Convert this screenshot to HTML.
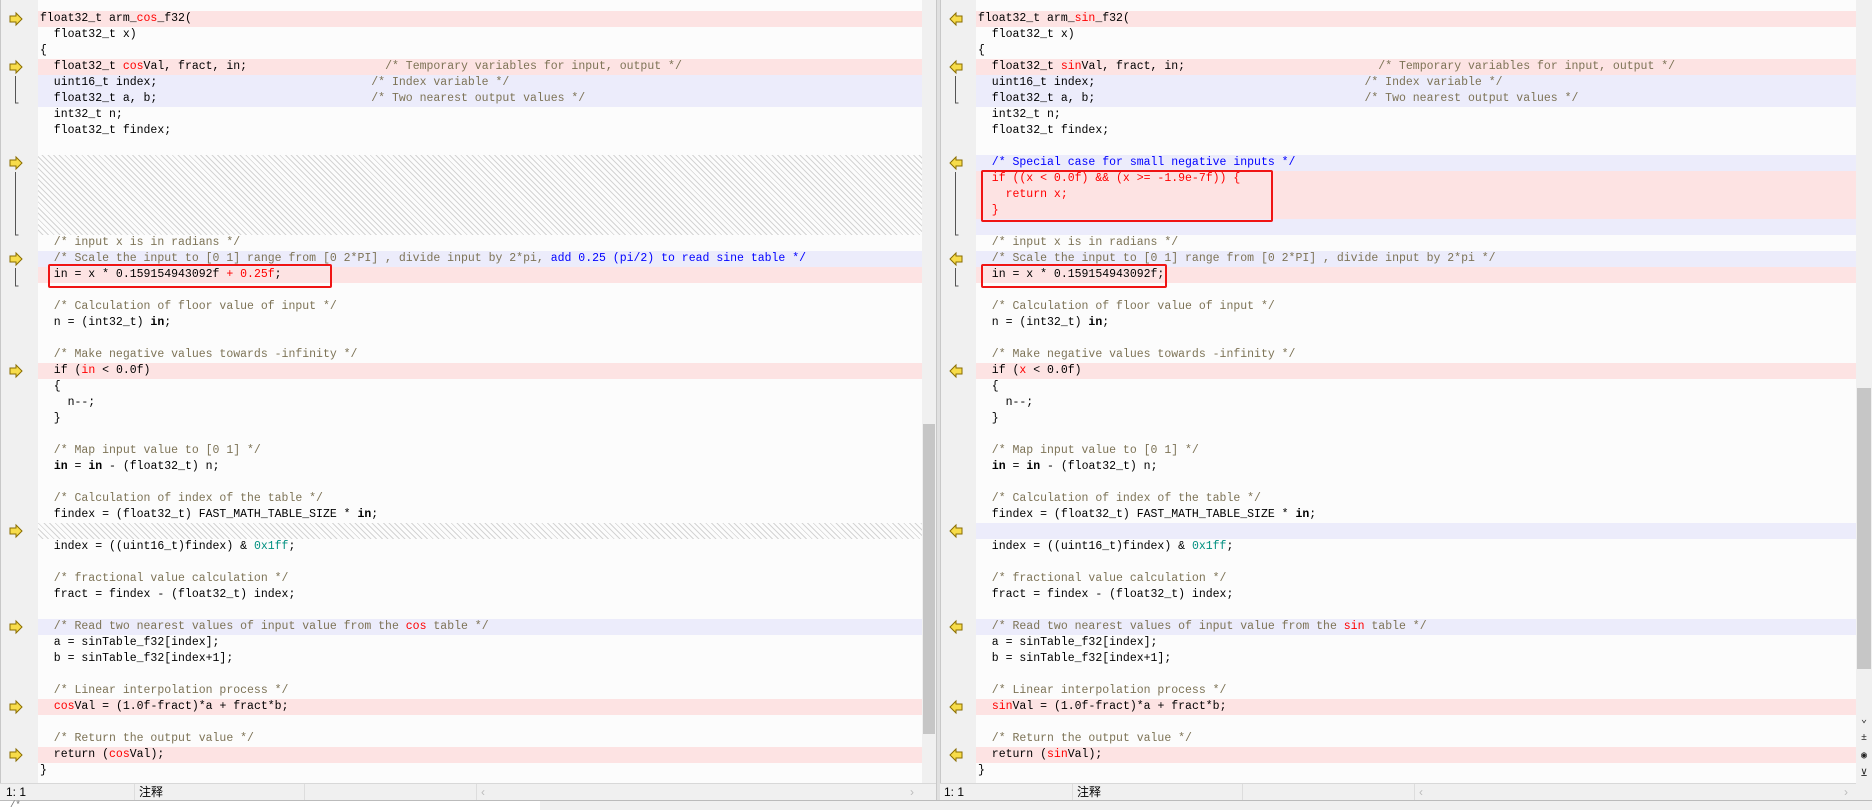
<!DOCTYPE html>
<html><head><meta charset="utf-8"><style>
*{margin:0;padding:0;box-sizing:border-box}
body{width:1872px;height:810px;overflow:hidden;background:#f0f0f0;font-family:"Liberation Mono",monospace;font-size:11.5px;color:#000;position:relative}
.pane{position:absolute;top:0;height:783px;background:#fcfcfc;overflow:hidden}
.gut{position:absolute;top:0;height:783px;background:#f0f0f0;border-left:1px solid #c8c8c8}
.r{position:absolute;left:0;right:0;height:16px;line-height:16px;white-space:pre;padding-left:2px}
.R{background:#fde3e3}.B{background:#ececfb}
.H{background:repeating-linear-gradient(45deg,#fcfcfc 0 3px,#d4d4d4 3px 4px)}
.c{color:#7d7356}.bl{color:#0000ff}.red{color:#f00}.g{color:#009080}.b{font-weight:bold}
.ar{position:absolute;width:14px;height:12px}
.br{position:absolute;border-left:1px solid #555;border-bottom:1px solid #555;width:5px}
.box{position:absolute;border:2px solid #f01414;border-radius:2px}
.sb{position:absolute;background:#f0f0f0}
.th{position:absolute;background:#c6c6c6}
.st{position:absolute;top:783px;height:17px;background:#f0f0f0;border-top:1px solid #d8d8d8;font-family:"Liberation Sans","Noto Sans CJK SC",sans-serif;font-size:12px;line-height:16px}
</style></head><body>

<!-- LEFT PANE -->
<div class="gut" style="left:0;width:38px"></div>
<div class="pane" style="left:38px;width:884px">
<div class="r R" style="top:11px">float32_t arm_<span class="red">cos</span>_f32(</div>
<div class="r" style="top:27px">  float32_t x)</div>
<div class="r" style="top:43px">{</div>
<div class="r R" style="top:59px">  float32_t <span class="red">cos</span>Val, fract, in;                    <span class="c">/* Temporary variables for input, output */</span></div>
<div class="r B" style="top:75px">  uint16_t index;                               <span class="c">/* Index variable */</span></div>
<div class="r B" style="top:91px">  float32_t a, b;                               <span class="c">/* Two nearest output values */</span></div>
<div class="r" style="top:107px">  int32_t n;</div>
<div class="r" style="top:123px">  float32_t findex;</div>
<div class="r H" style="top:155px;height:80px"></div>
<div class="r" style="top:235px"><span class="c">  /* input x is in radians */</span></div>
<div class="r B" style="top:251px"><span class="c">  /* Scale the input to [0 1] range from [0 2*PI] , divide input by 2*pi, </span><span class="bl">add 0.25 (pi/2) to read sine table */</span></div>
<div class="r R" style="top:267px">  in = x * 0.159154943092f<span class="red"> + 0.25f</span>;</div>
<div class="r" style="top:299px"><span class="c">  /* Calculation of floor value of input */</span></div>
<div class="r" style="top:315px">  n = (int32_t) <span class="b">in</span>;</div>
<div class="r" style="top:347px"><span class="c">  /* Make negative values towards -infinity */</span></div>
<div class="r R" style="top:363px">  if (<span class="red">in</span> &lt; 0.0f)</div>
<div class="r" style="top:379px">  {</div>
<div class="r" style="top:395px">    n--;</div>
<div class="r" style="top:411px">  }</div>
<div class="r" style="top:443px"><span class="c">  /* Map input value to [0 1] */</span></div>
<div class="r" style="top:459px">  <span class="b">in</span> = <span class="b">in</span> - (float32_t) n;</div>
<div class="r" style="top:491px"><span class="c">  /* Calculation of index of the table */</span></div>
<div class="r" style="top:507px">  findex = (float32_t) FAST_MATH_TABLE_SIZE * <span class="b">in</span>;</div>
<div class="r H" style="top:523px"></div>
<div class="r" style="top:539px">  index = ((uint16_t)findex) &amp; <span class="g">0x1ff</span>;</div>
<div class="r" style="top:571px"><span class="c">  /* fractional value calculation */</span></div>
<div class="r" style="top:587px">  fract = findex - (float32_t) index;</div>
<div class="r B" style="top:619px"><span class="c">  /* Read two nearest values of input value from the </span><span class="red">cos</span><span class="c"> table */</span></div>
<div class="r" style="top:635px">  a = sinTable_f32[index];</div>
<div class="r" style="top:651px">  b = sinTable_f32[index+1];</div>
<div class="r" style="top:683px"><span class="c">  /* Linear interpolation process */</span></div>
<div class="r R" style="top:699px">  <span class="red">cos</span>Val = (1.0f-fract)*a + fract*b;</div>
<div class="r" style="top:731px"><span class="c">  /* Return the output value */</span></div>
<div class="r R" style="top:747px">  return (<span class="red">cos</span>Val);</div>
<div class="r" style="top:763px">}</div>
</div>
<div class="sb" style="left:922px;top:0;width:14px;height:783px"></div>
<div class="th" style="left:923px;top:424px;width:12px;height:310px"></div>
<div style="position:absolute;left:936px;top:0;width:4px;height:800px;background:#e0e0e0;border-left:1px solid #c8c8c8"></div>

<!-- RIGHT PANE -->
<div class="gut" style="left:940px;width:36px"></div>
<div class="pane" style="left:976px;width:880px">
<div class="r R" style="top:11px">float32_t arm_<span class="red">sin</span>_f32(</div>
<div class="r" style="top:27px">  float32_t x)</div>
<div class="r" style="top:43px">{</div>
<div class="r R" style="top:59px">  float32_t <span class="red">sin</span>Val, fract, in;                            <span class="c">/* Temporary variables for input, output */</span></div>
<div class="r B" style="top:75px">  uint16_t index;                                       <span class="c">/* Index variable */</span></div>
<div class="r B" style="top:91px">  float32_t a, b;                                       <span class="c">/* Two nearest output values */</span></div>
<div class="r" style="top:107px">  int32_t n;</div>
<div class="r" style="top:123px">  float32_t findex;</div>
<div class="r B" style="top:155px"><span class="bl">  /* Special case for small negative inputs */</span></div>
<div class="r R red" style="top:171px">  if ((x &lt; 0.0f) &amp;&amp; (x &gt;= -1.9e-7f)) {</div>
<div class="r R red" style="top:187px">    return x;</div>
<div class="r R red" style="top:203px">  }</div>
<div class="r B" style="top:219px"></div>
<div class="r" style="top:235px"><span class="c">  /* input x is in radians */</span></div>
<div class="r B" style="top:251px"><span class="c">  /* Scale the input to [0 1] range from [0 2*PI] , divide input by 2*pi */</span></div>
<div class="r R" style="top:267px">  in = x * 0.159154943092f;</div>
<div class="r" style="top:299px"><span class="c">  /* Calculation of floor value of input */</span></div>
<div class="r" style="top:315px">  n = (int32_t) <span class="b">in</span>;</div>
<div class="r" style="top:347px"><span class="c">  /* Make negative values towards -infinity */</span></div>
<div class="r R" style="top:363px">  if (<span class="red">x</span> &lt; 0.0f)</div>
<div class="r" style="top:379px">  {</div>
<div class="r" style="top:395px">    n--;</div>
<div class="r" style="top:411px">  }</div>
<div class="r" style="top:443px"><span class="c">  /* Map input value to [0 1] */</span></div>
<div class="r" style="top:459px">  <span class="b">in</span> = <span class="b">in</span> - (float32_t) n;</div>
<div class="r" style="top:491px"><span class="c">  /* Calculation of index of the table */</span></div>
<div class="r" style="top:507px">  findex = (float32_t) FAST_MATH_TABLE_SIZE * <span class="b">in</span>;</div>
<div class="r B" style="top:523px"></div>
<div class="r" style="top:539px">  index = ((uint16_t)findex) &amp; <span class="g">0x1ff</span>;</div>
<div class="r" style="top:571px"><span class="c">  /* fractional value calculation */</span></div>
<div class="r" style="top:587px">  fract = findex - (float32_t) index;</div>
<div class="r B" style="top:619px"><span class="c">  /* Read two nearest values of input value from the </span><span class="red">sin</span><span class="c"> table */</span></div>
<div class="r" style="top:635px">  a = sinTable_f32[index];</div>
<div class="r" style="top:651px">  b = sinTable_f32[index+1];</div>
<div class="r" style="top:683px"><span class="c">  /* Linear interpolation process */</span></div>
<div class="r R" style="top:699px">  <span class="red">sin</span>Val = (1.0f-fract)*a + fract*b;</div>
<div class="r" style="top:731px"><span class="c">  /* Return the output value */</span></div>
<div class="r R" style="top:747px">  return (<span class="red">sin</span>Val);</div>
<div class="r" style="top:763px">}</div>
</div>
<div class="sb" style="left:1856px;top:0;width:16px;height:800px"></div>
<div class="th" style="left:1857px;top:388px;width:14px;height:281px"></div>
<div style="position:absolute;left:1858px;top:712px;font-size:10px;line-height:18px;text-align:center;width:12px;color:#222">⌄<br>±<br>◉<br>⊻</div>

<!-- red boxes -->
<div class="box" style="left:48px;top:264px;width:284px;height:24px"></div>
<div class="box" style="left:981px;top:170px;width:292px;height:52px"></div>
<div class="box" style="left:981px;top:264px;width:186px;height:24px"></div>

<!-- arrows -->
<svg width="1872" height="783" style="position:absolute;left:0;top:0">
<defs>
<polygon id="ra" points="0,3 6,3 6,0 12,6 6,12 6,9 0,9" fill="#f7dc4a" stroke="#8a6d00" stroke-width="1"/>
<polygon id="la" points="12,3 6,3 6,0 0,6 6,12 6,9 12,9" fill="#f7dc4a" stroke="#8a6d00" stroke-width="1"/>
</defs>
<g transform="translate(10,0)">
<use href="#ra" y="13"/><use href="#ra" y="61"/><use href="#ra" y="157"/><use href="#ra" y="253"/><use href="#ra" y="365"/><use href="#ra" y="525"/><use href="#ra" y="621"/><use href="#ra" y="701"/><use href="#ra" y="749"/>
</g>
<g transform="translate(950,0)">
<use href="#la" y="13"/><use href="#la" y="61"/><use href="#la" y="157"/><use href="#la" y="253"/><use href="#la" y="365"/><use href="#la" y="525"/><use href="#la" y="621"/><use href="#la" y="701"/><use href="#la" y="749"/>
</g>
<g stroke="#555" fill="none">
<path d="M15.5 76v27h3M15.5 172v63h3M15.5 268v18h3"/>
<path d="M955.5 76v27h3M955.5 172v63h3M955.5 268v18h3"/>
</g>
</svg>

<!-- status bars -->
<div class="st" style="left:0;width:936px"><span style="position:absolute;left:6px">1: 1</span><span style="position:absolute;left:134px;border-left:1px solid #ddd;padding-left:4px;height:16px">注释</span><span style="position:absolute;left:304px;height:16px;border-left:1px solid #ddd"></span><span style="position:absolute;left:476px;width:446px;height:16px;border-left:1px solid #ddd;color:#bbb;padding-left:4px">‹<span style="float:right;margin-right:8px">›</span></span></div>
<div class="st" style="left:940px;width:916px"><span style="position:absolute;left:4px">1: 1</span><span style="position:absolute;left:132px;border-left:1px solid #ddd;padding-left:4px;height:16px">注释</span><span style="position:absolute;left:302px;height:16px;border-left:1px solid #ddd"></span><span style="position:absolute;left:474px;width:442px;height:16px;border-left:1px solid #ddd;color:#bbb;padding-left:4px">‹<span style="float:right;margin-right:8px">›</span></span></div>
<div style="position:absolute;left:0;top:800px;width:1872px;height:10px;background:#f0f0f0;border-top:1px solid #bbb"></div>
<div style="position:absolute;left:0;top:801px;width:540px;height:9px;background:#fff;font-size:9px;line-height:9px;color:#666;padding-left:10px">/*</div>
</body></html>
